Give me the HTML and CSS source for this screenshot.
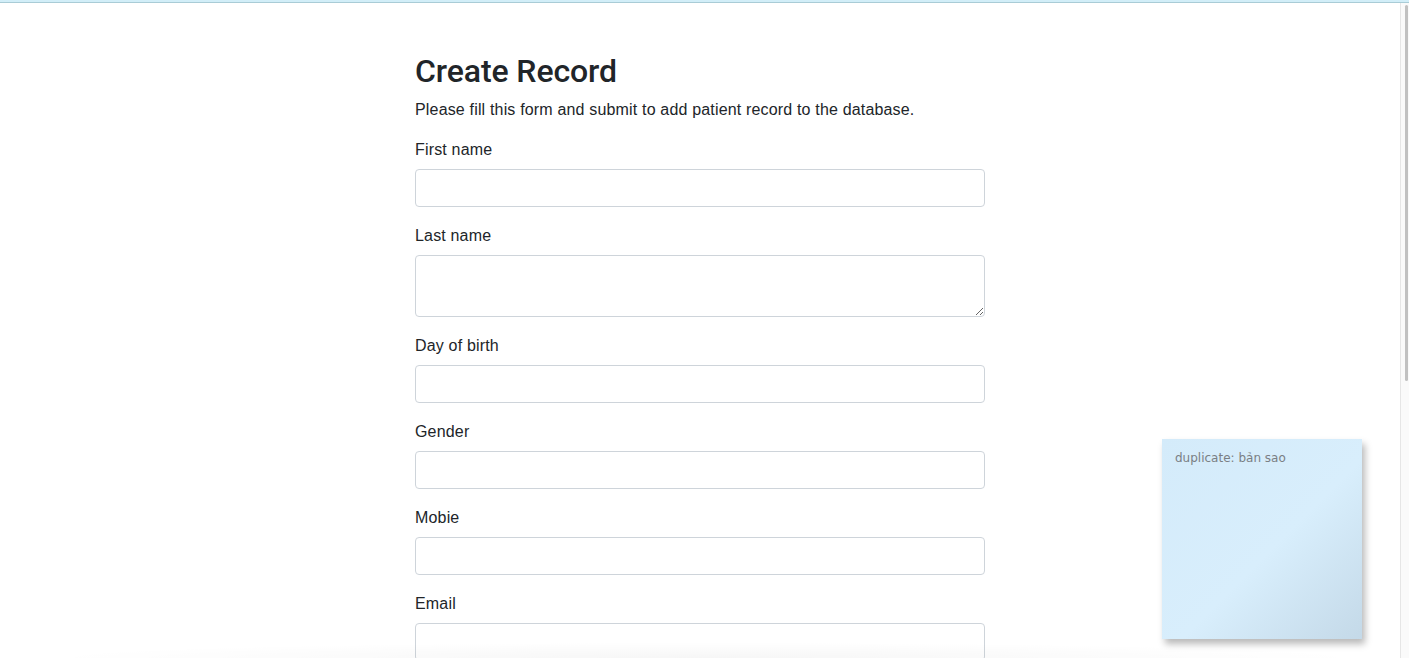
FILE: index.html
```html
<!DOCTYPE html>
<html lang="en">
<head>
<meta charset="utf-8">
<title>Create Record</title>
<link rel="stylesheet" href="styles.css">
</head>
<body>
<div class="topbar"></div>
<div class="frame">
  <main class="page">
    <div class="wrapper">
      <h2 class="title">Create Record</h2>
      <p class="lead">Please fill this form and submit to add patient record to the database.</p>
      <form class="form">
        <div class="group">
          <label class="label">First name</label>
          <input class="control" type="text">
        </div>
        <div class="group">
          <label class="label">Last name</label>
          <textarea class="control area" rows="2"></textarea>
        </div>
        <div class="group">
          <label class="label">Day of birth</label>
          <input class="control" type="text">
        </div>
        <div class="group">
          <label class="label">Gender</label>
          <input class="control" type="text">
        </div>
        <div class="group">
          <label class="label">Mobie</label>
          <input class="control" type="text">
        </div>
        <div class="group">
          <label class="label">Email</label>
          <input class="control" type="text">
        </div>
      </form>
    </div>
    <div class="note">duplicate: bản sao</div>
    <div class="fade"></div>
  </main>
  <div class="scrollbar"><div class="thumb"></div></div>
</div>
</body>
</html>
```
FILE: styles.css
```css
* { box-sizing: border-box; }
html, body { margin: 0; height: 100%; }
body {
  font-family: "Liberation Sans", Arial, sans-serif;
  color: #212529;
  background: #fff;
  overflow: hidden;
  display: flex;
  flex-direction: column;
}
.topbar {
  height: 3px;
  flex: none;
  background: #d2eef8;
  border-bottom: 1px solid #a9ccd6;
}
.frame {
  flex: 1;
  display: flex;
  min-height: 0;
}
.page {
  flex: 1;
  position: relative;
  overflow: hidden;
}
.wrapper {
  width: 570px;
  margin: 0 auto;
  padding-top: 50px;
}
.title {
  font-family: Roboto, "Liberation Sans", sans-serif;
  font-size: 32px;
  font-weight: 500;
  line-height: 36px;
  margin: 0 0 8px;
  letter-spacing: -0.1px;
}
.lead {
  font-size: 16px;
  line-height: 24px;
  padding-top: 1px;
  margin: 0 0 15px;
  letter-spacing: 0.17px;
}
.form { margin: 0; }
.group {
  display: flex;
  flex-direction: column;
  margin-bottom: 16px;
}
.label {
  font-size: 16px;
  line-height: 24px;
  padding-top: 1px;
  margin-bottom: 7px;
  letter-spacing: 0.17px;
}
.control {
  display: block;
  width: 100%;
  height: 38px;
  padding: 6px 12px;
  font: inherit;
  font-size: 16px;
  line-height: 24px;
  border: 1px solid #ced4da;
  border-radius: 4px;
  background: #fff;
  margin: 0;
}
.area {
  height: 62px;
  resize: vertical;
}
.note {
  position: absolute;
  left: 1162px;
  top: 436px;
  width: 200px;
  height: 200px;
  padding: 12px 13px;
  font-family: "DejaVu Sans", Verdana, sans-serif;
  font-size: 12px;
  color: #7a7f84;
  background: linear-gradient(135deg, #d4ebfa 0%, #d8eefc 55%, #c4d9e8 100%);
  box-shadow: 3px 5px 7px rgba(0,0,0,0.28);
}
.fade {
  position: absolute;
  left: 30px;
  right: 20px;
  bottom: 0;
  height: 16px;
  background: radial-gradient(ellipse at 50% 100%, rgba(0,0,0,0.035), rgba(0,0,0,0) 70%);
  pointer-events: none;
}
.scrollbar {
  width: 9px;
  flex: none;
  background: #fafafa;
  border-left: 1px solid #e6e6e6;
  padding: 2px 1px 0 4px;
}
.thumb {
  height: 376px;
  background: #c1c1c1;
  border-radius: 2px;
}
```
